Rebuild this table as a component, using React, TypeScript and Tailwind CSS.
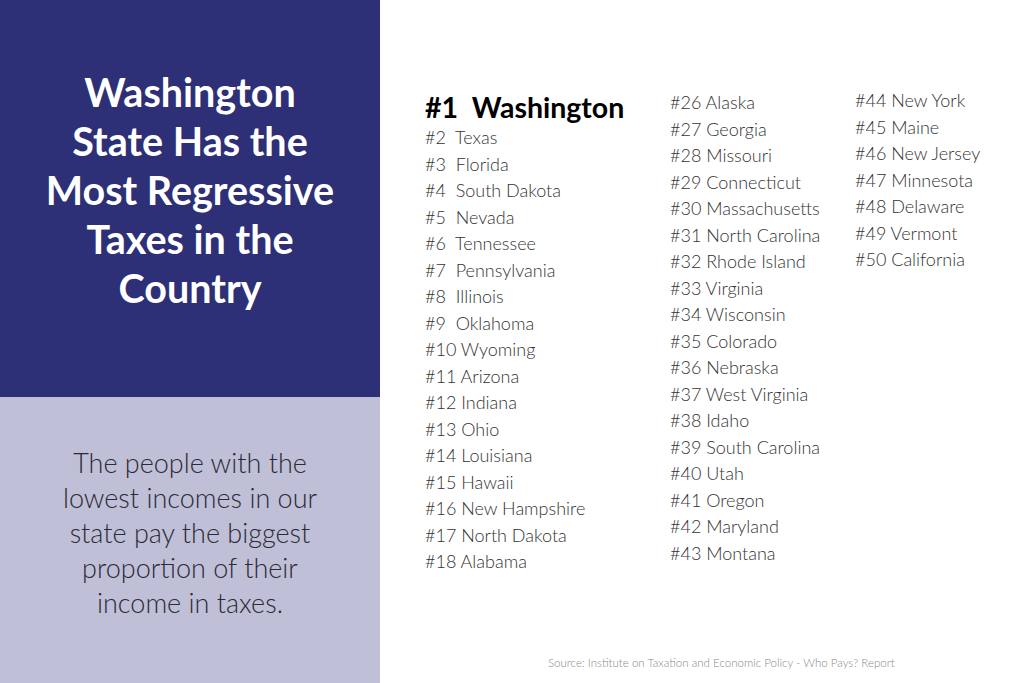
const col1 = [
  "Texas",
  "Florida",
  "South Dakota",
  "Nevada",
  "Tennessee",
  "Pennsylvania",
  "Illinois",
  "Oklahoma",
  "Wyoming",
  "Arizona",
  "Indiana",
  "Ohio",
  "Louisiana",
  "Hawaii",
  "New Hampshire",
  "North Dakota",
  "Alabama",
];

const col2 = [
  "Alaska",
  "Georgia",
  "Missouri",
  "Connecticut",
  "Massachusetts",
  "North Carolina",
  "Rhode Island",
  "Virginia",
  "Wisconsin",
  "Colorado",
  "Nebraska",
  "West Virginia",
  "Idaho",
  "South Carolina",
  "Utah",
  "Oregon",
  "Maryland",
  "Montana",
];

const col3 = [
  "New York",
  "Maine",
  "New Jersey",
  "Minnesota",
  "Delaware",
  "Vermont",
  "California",
];

const Rank = ({ n, name }: { n: number; name: string }) => (
  <li className="whitespace-pre">
    {n < 10 ? `#${n}  ${name}` : `#${n} ${name}`}
  </li>
);

export default function App() {
  return (
    <main className="flex h-[683px] w-full bg-white font-['Lato',sans-serif] text-[#333]">
      {/* left panel */}
      <section className="flex w-[380px] flex-col">
        <div className="flex h-[397px] items-center justify-center bg-[#2d2f77] px-4 pb-[18px]">
          <h1 className="text-center text-[39.5px] font-bold leading-[49px] text-white">
            Washington
            <br />
            State Has the
            <br />
            Most Regressive
            <br />
            Taxes in the
            <br />
            Country
          </h1>
        </div>
        <div className="flex flex-1 items-center justify-center bg-[#bfbfd8] pb-[16px]">
          <p className="text-center text-[27px] font-light leading-[35px] text-[#2b2b33]">
            The people with the
            <br />
            lowest incomes in our
            <br />
            state pay the biggest
            <br />
            proportion of their
            <br />
            income in taxes.
          </p>
        </div>
      </section>

      {/* rankings */}
      <section className="flex flex-1 flex-col pl-[45px]">
        <div className="flex text-[18px] font-light leading-[26.5px]">
          <div className="mt-[90px] w-[245px]">
            <h2 className="whitespace-pre text-[28.5px] font-bold leading-[34px] text-black">
              {"#1  Washington"}
            </h2>
            <ul>
              {col1.map((s, i) => (
                <Rank key={s} n={i + 2} name={s} />
              ))}
            </ul>
          </div>
          <ul className="mt-[89px] w-[185px]">
            {col2.map((s, i) => (
              <Rank key={s} n={i + 26} name={s} />
            ))}
          </ul>
          <ul className="mt-[87px]">
            {col3.map((s, i) => (
              <Rank key={s} n={i + 44} name={s} />
            ))}
          </ul>
        </div>
        <p className="mt-auto mb-[12px] pl-[123px] text-[11.5px] font-light text-[#8a8a8a]">
          Source: Institute on Taxation and Economic Policy - Who Pays? Report
        </p>
      </section>
    </main>
  );
}
